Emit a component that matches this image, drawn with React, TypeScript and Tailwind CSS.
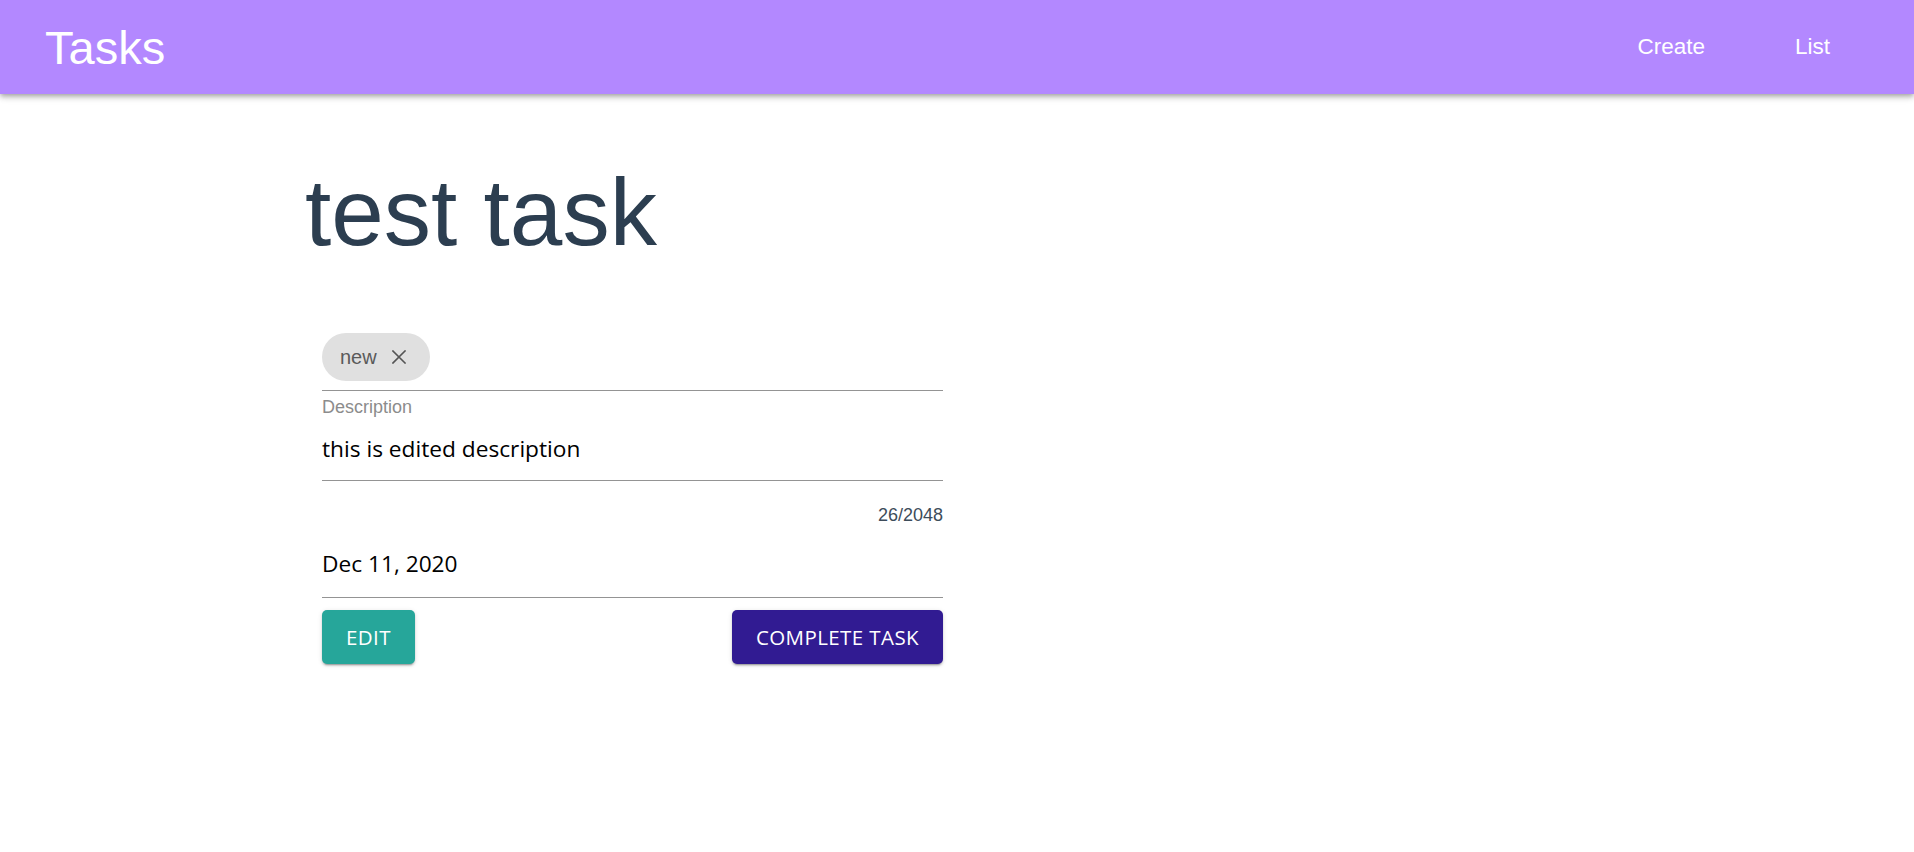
import React from "react";

const sans = "font-['Liberation_Sans',Arial,sans-serif]";
const ui = "font-['Open_Sans','Noto_Sans',sans-serif]";

function CloseIcon() {
  return (
    <svg width="14" height="14" viewBox="0 0 14 14" className="text-[#555]">
      <path
        d="M1 1 L13 13 M13 1 L1 13"
        stroke="currentColor"
        strokeWidth="1.6"
        strokeLinecap="square"
        fill="none"
      />
    </svg>
  );
}

export default function App() {
  return (
    <div className="min-h-screen bg-white">
      {/* Top bar */}
      <header
        className={`${sans} h-[94px] bg-[#b388ff] text-white flex items-center pl-[45px] pr-[84px] shadow-[0_2px_4px_-1px_rgba(0,0,0,0.2),0_4px_5px_0_rgba(0,0,0,0.14),0_1px_10px_0_rgba(0,0,0,0.12)] relative`}
      >
        <div className="text-[47px] leading-none">Tasks</div>
        <nav className="ml-auto flex gap-[90px] text-[22.5px] leading-none">
          <span>Create</span>
          <span>List</span>
        </nav>
      </header>

      <main className="pl-[305px]">
        <h1
          className={`${sans} mt-[70px] text-[94.5px] leading-[96px] text-[#2c3e50]`}
        >
          test task
        </h1>

        <div className="ml-[17px] mt-[73px] w-[621px]">
          {/* Tags */}
          <div className="pb-[9px] border-b border-[#949494]">
            <span
              className={`${sans} inline-flex items-center h-[48px] rounded-full bg-[#e0e0e0] pl-[18px] pr-[24px] text-[20px] text-[#5a5a5a]`}
            >
              new
              <span className="ml-[15px] flex">
                <CloseIcon />
              </span>
            </span>
          </div>

          {/* Description field */}
          <div className="border-b border-[#949494] pb-[16px]">
            <div
              className={`${sans} mt-[7px] text-[18px] leading-[18px] text-[#8c8c8c]`}
            >
              Description
            </div>
            <div
              className={`${ui} mt-[18px] text-[22.7px] leading-[30px] text-black`}
            >
              this is edited description
            </div>
          </div>
          <div
            className={`${sans} mt-[25px] text-right text-[18px] leading-[18px] text-[#3d4c5a]`}
          >
            26/2048
          </div>

          {/* Due date */}
          <div className="border-b border-[#949494] pb-[18px] mt-[25px]">
            <div className={`${ui} text-[22.7px] leading-[30px] text-black`}>
              Dec 11, 2020
            </div>
          </div>

          {/* Actions */}
          <div className={`${ui} mt-[12px] flex justify-between`}>
            <button className="h-[54px] w-[93px] rounded-[5px] bg-[#26a69a] text-white text-[20.5px] tracking-[0.02em] flex items-center justify-center shadow-[0_3px_1px_-2px_rgba(0,0,0,0.2),0_2px_2px_0_rgba(0,0,0,0.14),0_1px_5px_0_rgba(0,0,0,0.12)]">
              EDIT
            </button>
            <button className="h-[54px] w-[211px] rounded-[5px] bg-[#311b92] text-white text-[20.5px] tracking-[0.02em] flex items-center justify-center shadow-[0_3px_1px_-2px_rgba(0,0,0,0.2),0_2px_2px_0_rgba(0,0,0,0.14),0_1px_5px_0_rgba(0,0,0,0.12)]">
              COMPLETE TASK
            </button>
          </div>
        </div>
      </main>
    </div>
  );
}
